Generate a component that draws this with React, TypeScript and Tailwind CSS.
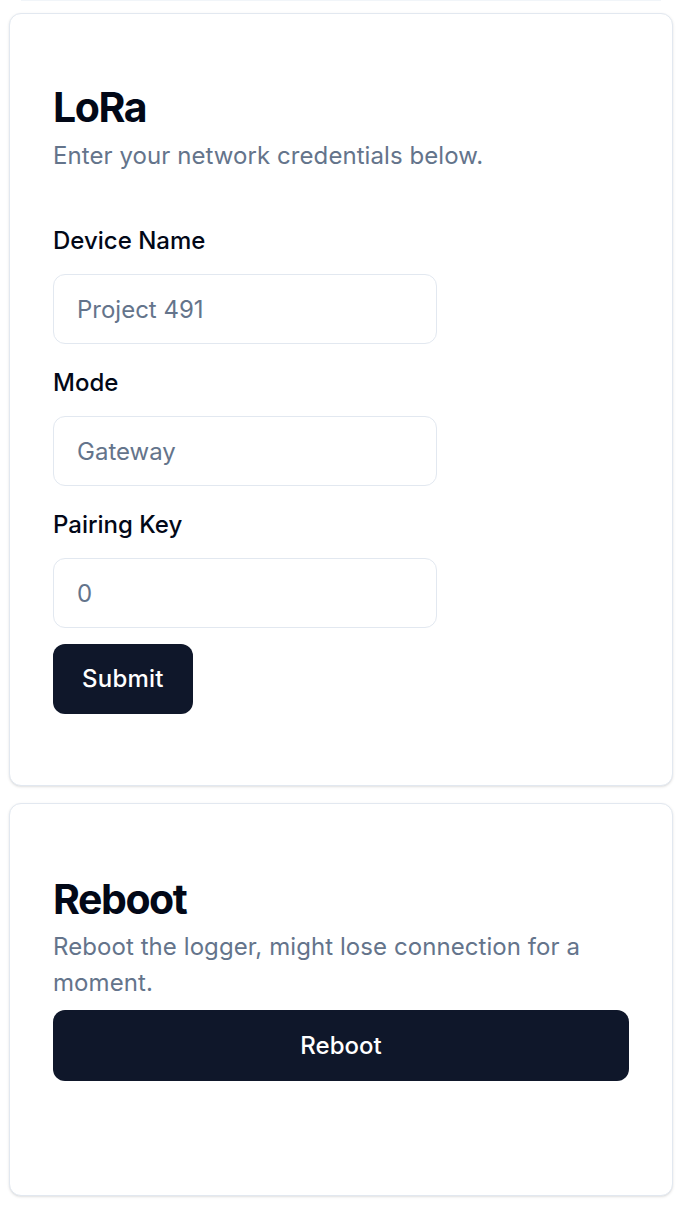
import { useState } from 'react'

const FONT = "font-['Inter','Liberation_Sans',sans-serif]"

interface FieldProps {
  label: string
  value: string
  first?: boolean
  onChange: (v: string) => void
}

const Field = ({ label, value, first, onChange }: FieldProps) => (
  <div className={first ? 'flex flex-col' : 'mt-[27px] flex flex-col'}>
    <label className="block text-[24px] font-medium leading-[24px] text-[#020817]">
      {label}
    </label>
    <input
      className="mt-[21px] h-[70px] w-[384px] rounded-[12px] border border-[#e2e8f0] bg-white px-[23px] text-[24px] text-[#64748b] outline-none"
      value={value}
      onChange={(e) => onChange(e.target.value)}
    />
  </div>
)

export default function App() {
  const [deviceName, setDeviceName] = useState('Project 491')
  const [mode, setMode] = useState('Gateway')
  const [pairingKey, setPairingKey] = useState('0')

  return (
    <div className={`min-h-screen bg-white pl-[9px] pr-[13px] ${FONT}`}>
      {/* edge of the card scrolled above */}
      <div className="mx-[12px] h-px bg-[#f1f5f9]" />

      <div className="mt-[12px] flex flex-col gap-[17px]">
        {/* LoRa settings */}
        <div className="rounded-[12px] border border-[#e2e8f0] bg-white px-[43px] pt-[73px] pb-[71px] shadow-sm">
          <h2 className="text-[41px] font-bold leading-none tracking-[-0.035em] text-[#020817]">
            LoRa
          </h2>
          <p className="mt-[10px] text-[24px] leading-[36px] tracking-[0.003em] text-[#64748b]">
            Enter your network credentials below.
          </p>
          <form
            className="mt-[55px] flex flex-col items-start"
            onSubmit={(e) => e.preventDefault()}
          >
            <Field label="Device Name" value={deviceName} onChange={setDeviceName} first />
            <Field label="Mode" value={mode} onChange={setMode} />
            <Field label="Pairing Key" value={pairingKey} onChange={setPairingKey} />
            <button
              type="submit"
              className="mt-[16px] h-[70px] rounded-[12px] bg-[#0f172a] px-[29px] text-[24px] font-medium tracking-[0.01em] text-white"
            >
              Submit
            </button>
          </form>
        </div>

        {/* Reboot */}
        <div className="rounded-[12px] border border-[#e2e8f0] bg-white px-[43px] pt-[75px] pb-[114px] shadow-sm">
          <h2 className="text-[41px] font-bold leading-none tracking-[-0.035em] text-[#020817]">
            Reboot
          </h2>
          <p className="mt-[9px] text-[24px] leading-[36px] tracking-[0.003em] text-[#64748b]">
            Reboot the logger, might lose connection for a moment.
          </p>
          <button className="mt-[9px] h-[71px] w-full rounded-[12px] bg-[#0f172a] text-[24px] font-medium text-white">
            Reboot
          </button>
        </div>
      </div>
    </div>
  )
}
